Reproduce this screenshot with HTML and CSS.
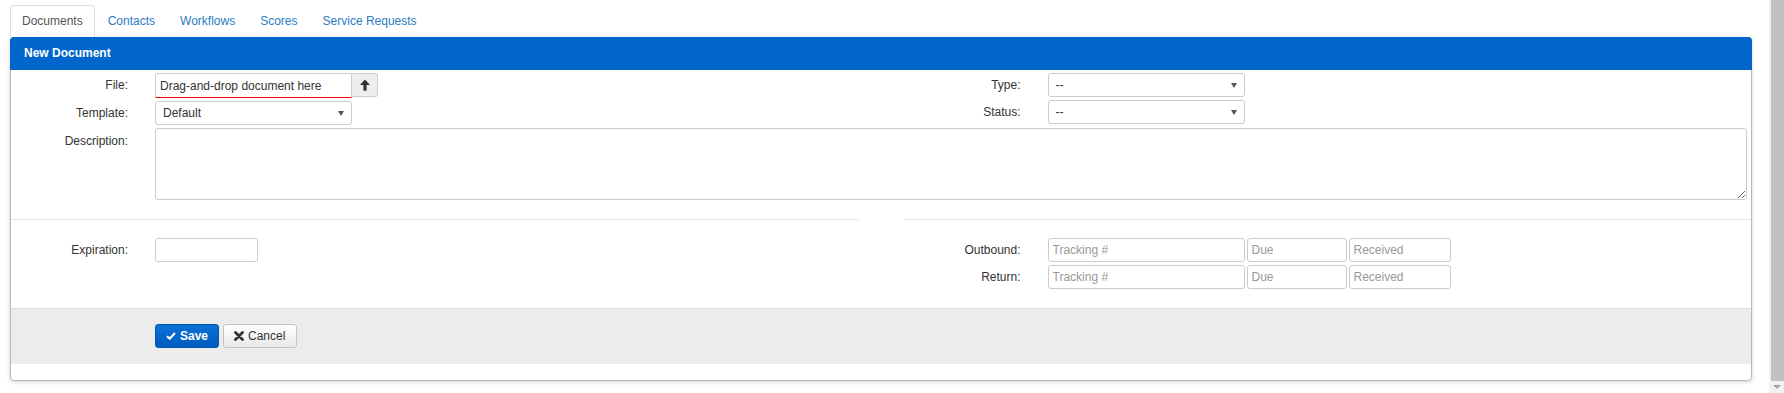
FILE: index.html
```html
<!DOCTYPE html>
<html lang="en">
	<head>
		<meta charset="utf-8" />
		<title>New Document</title>
		<link rel="stylesheet" href="styles.css">
	</head>
	<body>
		<div class="page">
			<ul class="tabs">
				<li class="active"><a>Documents</a></li>
				<li><a>Contacts</a></li>
				<li><a>Workflows</a></li>
				<li><a>Scores</a></li>
				<li><a>Service Requests</a></li>
			</ul>
			<div class="panel">
				<div class="panel-heading">New Document</div>
				<div class="panel-body">
					<div class="cols">
						<div class="col">
							<div class="field">
								<label>File:</label>
								<div class="file-group">
									<input class="input file-drop" type="text" value="Drag-and-drop document here">
									<button class="upload">
										<svg width="10" height="12" viewBox="0 0 10 12"><path d="M5 0.5 L9.6 5.4 Q9.8 6 9.2 6 H6.6 V11.2 Q6.6 11.8 6 11.8 H4 Q3.4 11.8 3.4 11.2 V6 H0.8 Q0.2 6 0.4 5.4 Z" fill="#333"/></svg>
									</button>
								</div>
							</div>
							<div class="field">
								<label>Template:</label>
								<div class="select"><span>Default</span><i class="caret"></i></div>
							</div>
						</div>
						<div class="col">
							<div class="field">
								<label>Type:</label>
								<div class="select"><span>--</span><i class="caret"></i></div>
							</div>
							<div class="field">
								<label>Status:</label>
								<div class="select"><span>--</span><i class="caret"></i></div>
							</div>
						</div>
					</div>
					<div class="field field-wide">
						<label>Description:</label>
						<textarea class="input"></textarea>
					</div>
					<div class="cols divider">
						<hr>
						<hr>
					</div>
					<div class="cols">
						<div class="col">
							<div class="field">
								<label>Expiration:</label>
								<input class="input short" type="text">
							</div>
						</div>
						<div class="col">
							<div class="field">
								<label>Outbound:</label>
								<div class="tracking">
									<input class="input track" type="text" placeholder="Tracking #">
									<input class="input due" type="text" placeholder="Due">
									<input class="input received" type="text" placeholder="Received">
								</div>
							</div>
							<div class="field">
								<label>Return:</label>
								<div class="tracking">
									<input class="input track" type="text" placeholder="Tracking #">
									<input class="input due" type="text" placeholder="Due">
									<input class="input received" type="text" placeholder="Received">
								</div>
							</div>
						</div>
					</div>
				</div>
				<div class="panel-footer">
					<button class="btn btn-primary">
						<svg width="12" height="10" viewBox="0 0 12 10"><path d="M1.2 5.2 L4.4 8.2 L10.8 1.4" fill="none" stroke="#fff" stroke-width="2.6" stroke-linejoin="round"/></svg>
						Save
					</button>
					<button class="btn btn-default">
						<svg width="10" height="10" viewBox="0 0 10 10"><path d="M1.5 1.5 L8.5 8.5 M8.5 1.5 L1.5 8.5" fill="none" stroke="#333" stroke-width="2.8" stroke-linecap="round"/></svg>
						Cancel
					</button>
				</div>
			</div>
		</div>
		<div class="scrollbar">
			<div class="thumb"></div>
			<div class="down"></div>
		</div>
	</body>
</html>
```

FILE: styles.css
```css
* {
	box-sizing: border-box;
}
body {
	margin: 0;
	display: flex;
	height: 393px;
	overflow: hidden;
	background-color: #fff;
	font-family: "Liberation Sans", Arial, sans-serif;
	font-size: 12px;
	color: #333;
}
.page {
	flex: 1;
	min-width: 0;
	padding: 5px 17px 0 10px;
}
.tabs {
	display: flex;
	list-style: none;
	margin: 0;
	padding: 0;
	height: 32px;
}
.tabs li {
	margin-right: 1px;
}
.tabs a {
	display: block;
	padding: 7px 11px;
	line-height: 17px;
	border: 1px solid transparent;
	border-bottom: none;
	border-radius: 4px 4px 0 0;
	color: #2a7cc5;
}
.tabs li.active a {
	color: #555;
	background-color: #fff;
	border-color: #ddd;
}
.panel {
	border: 1px solid #b8b8b8;
	border-radius: 4px;
	padding-bottom: 16px;
	box-shadow: 0 1px 4px rgba(0, 0, 0, 0.18);
}
.panel-heading {
	margin: -1px -1px 0;
	height: 33px;
	padding: 0 14px;
	line-height: 33px;
	background-color: #0066cc;
	color: #fff;
	font-weight: bold;
	border-radius: 4px 4px 0 0;
}
.panel-body {
	padding: 3px 0 19px;
}
.cols {
	display: grid;
	grid-template-columns: 1fr 1fr;
	column-gap: 45px;
}
.col {
	display: flex;
	flex-direction: column;
	gap: 3px;
}
.field {
	display: grid;
	grid-template-columns: 117px auto;
	column-gap: 27px;
	align-items: center;
	justify-items: start;
}
.field label {
	justify-self: end;
	line-height: 17px;
}
.field-wide {
	margin-top: 3px;
	margin-right: 4px;
	grid-template-columns: 117px 1fr;
	align-items: start;
	justify-items: stretch;
}
.field-wide label {
	padding-top: 5px;
}
.input {
	height: 24px;
	padding: 0 4px;
	border: 1px solid #ccc;
	border-radius: 3px;
	font-family: inherit;
	font-size: 12px;
	color: #333;
	background-color: #fff;
	outline: none;
}
.input::placeholder {
	color: #999;
}
textarea.input {
	height: 72px;
	resize: vertical;
}
.file-group {
	display: flex;
}
.file-drop {
	width: 197px;
	height: 25px;
	border-bottom: 1px solid #f00;
	border-radius: 3px 0 0 0;
}
.upload {
	width: 26px;
	height: 24px;
	display: flex;
	align-items: center;
	justify-content: center;
	padding: 0;
	background-color: #eee;
	border: 1px solid #ccc;
	border-left: none;
	border-radius: 0 3px 3px 0;
}
.select {
	width: 197px;
	height: 24px;
	display: flex;
	align-items: center;
	justify-content: space-between;
	padding: 0 7px 0 7px;
	border: 1px solid #ccc;
	border-radius: 3px;
	background-color: #fff;
}
.caret {
	width: 0;
	height: 0;
	border-left: 3px solid transparent;
	border-right: 3px solid transparent;
	border-top: 5px solid #555;
}
.short {
	width: 103px;
}
.tracking {
	display: flex;
	gap: 2px;
}
.track {
	width: 197px;
}
.due {
	width: 100px;
}
.received {
	width: 102px;
}
.divider {
	margin: 19px 0 18px;
}
.divider hr {
	margin: 0;
	border: none;
	border-top: 1px solid #e8e8e8;
}
.panel-footer {
	padding: 15px 0 16px 144px;
	background-color: #ececec;
	border-top: 1px solid #dcdcdc;
	display: flex;
	gap: 4px;
}
.btn {
	height: 24px;
	display: flex;
	align-items: center;
	gap: 4px;
	padding: 0 10px;
	border-radius: 3px;
	font-family: inherit;
	font-size: 12px;
}
.btn-primary {
	width: 64px;
	color: #fff;
	font-weight: bold;
	background: linear-gradient(#0c72d8, #005bbd);
	border: 1px solid #0055ad;
}
.btn-default {
	width: 74px;
	color: #333;
	background: linear-gradient(#fff, #e8e8e8);
	border: 1px solid #c4c4c4;
}
.scrollbar {
	width: 15px;
	background-color: #f1f1f1;
}
.thumb {
	margin-left: 2px;
	height: 381px;
	background-color: #c1c1c1;
}
.down {
	margin: 4px auto 0;
	width: 0;
	height: 0;
	border-left: 4px solid transparent;
	border-right: 4px solid transparent;
	border-top: 4px solid #a3a3a3;
}
```
